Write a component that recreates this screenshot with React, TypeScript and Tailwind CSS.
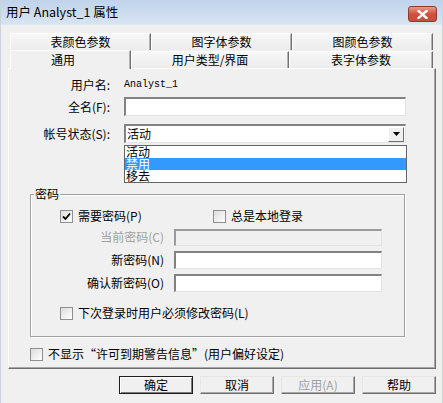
import React from "react";

const sunken =
  "bg-white border-t-2 border-l-2 border-r border-b border-t-[#828282] border-l-[#828282] border-r-[#e3e3e3] border-b-[#e3e3e3]";

function CheckBox({ checked = false }: { checked?: boolean }) {
  return (
    <span className="flex items-center justify-center w-[13px] h-[13px] shrink-0 border border-[#8f8f8f] bg-gradient-to-br from-[#dcdcdc] to-white">
      {checked && (
        <svg width="9" height="9" viewBox="0 0 9 9">
          <path d="M1 4.5 L3.5 7 L8 1.5" fill="none" stroke="#000" strokeWidth="1.8" />
        </svg>
      )}
    </span>
  );
}

function Check({ checked, label, className = "" }: { checked?: boolean; label: string; className?: string }) {
  return (
    <div className={"flex items-center gap-[5px] h-[14px] " + className}>
      <CheckBox checked={checked} />
      <span className="text-[12px] leading-[14px]">{label}</span>
    </div>
  );
}

function Tab({ label, w, selected = false }: { label: string; w: string; selected?: boolean }) {
  return (
    <div
      className={
        w +
        " flex items-center justify-center text-[12px] leading-[14px] border-t border-l border-t-white border-l-white border-r border-r-[#6f6f6f] shadow-[inset_-1px_0_0_#b4b4b4] " +
        (selected
          ? "h-[19px] -mb-px z-10 bg-[#f0f0f0] justify-start pl-[40px] self-start"
          : "h-[17px] bg-gradient-to-b from-[#f7f7f7] to-[#ececec] self-end")
      }
    >
      {label}
    </div>
  );
}

function Btn({ label, def = false, disabled = false }: { label: string; def?: boolean; disabled?: boolean }) {
  return (
    <button
      className={
        "w-[74px] h-[18px] flex items-center justify-center text-[12px] leading-[14px] bg-[#f0f0f0] " +
        (def
          ? "border border-[#1e1e1e] shadow-[inset_1px_1px_0_#fff,inset_-1px_-1px_0_#7a7a7a]"
          : "border border-t-[#e6e6e6] border-l-[#e6e6e6] border-r-[#6f6f6f] border-b-[#6f6f6f] shadow-[inset_-1px_-1px_0_#a8a8a8]") +
        (disabled ? " text-[#a0a0a0]" : " text-black")
      }
    >
      {label}
    </button>
  );
}

export default function App() {
  return (
    <div className="w-[443px] h-[403px] bg-[#f0f0f0] flex flex-col overflow-hidden text-black font-['Noto_Sans_CJK_SC',sans-serif] border-l border-r border-[#c9d3de]">
      {/* 标题栏 */}
      <div className="h-[25px] shrink-0 flex items-center justify-between pl-[5px] pr-[5px] bg-gradient-to-b from-[#c0d3ea] to-[#d7e4f2] border-b border-[#dfe7f1]">
        <span className="text-[12.5px] leading-[16px]">用户 Analyst_1 属性</span>
        <div className="mt-[4px] w-[29px] h-[16px] rounded-[3px] border border-[#8a3a30] bg-gradient-to-b from-[#e79a8a] via-[#cf4f3c] to-[#c8503d] flex items-center justify-center">
          <svg width="11" height="9" viewBox="0 0 11 9">
            <path d="M1.5 1 L9.5 8 M9.5 1 L1.5 8" stroke="#fff" strokeWidth="2.4" strokeLinecap="square" />
          </svg>
        </div>
      </div>

      {/* 选项卡 */}
      <div className="mt-[8px] ml-[9px] flex flex-col">
        <div className="flex w-[423px]">
          <Tab label="表颜色参数" w="w-[141px]" />
          <Tab label="图字体参数" w="w-[141px]" />
          <Tab label="图颜色参数" w="w-[141px]" />
        </div>
        <div className="flex w-[423px] h-[18px]">
          <Tab label="通用" w="w-[121px]" selected />
          <Tab label="用户类型/界面" w="w-[158px]" />
          <Tab label="表字体参数" w="w-[144px]" />
        </div>
      </div>

      {/* 面板 */}
      <div className="ml-[7px] w-[428px] h-[301px] shrink-0 border border-t-white border-l-white border-r-[#6f6f6f] border-b-[#6f6f6f] shadow-[inset_-1px_-1px_0_#a8a8a8] flex flex-col">
        <div className="pt-[9px] flex flex-col">
          <div className="flex items-center h-[14px]">
            <span className="w-[101px] text-right text-[12px] leading-[14px]">用户名:</span>
            <span className="ml-[14px] font-['Liberation_Mono',monospace] text-[10px] leading-[14px]">Analyst_1</span>
          </div>
          <div className="flex items-center mt-[5px] h-[19px]">
            <span className="w-[101px] text-right text-[12px] leading-[14px]">全名(F):</span>
            <div className={"ml-[14px] w-[282px] h-[19px] " + sunken} />
          </div>
          <div className="flex items-center mt-[8px] h-[19px]">
            <span className="w-[101px] text-right text-[12px] leading-[14px]">帐号状态(S):</span>
            <div className="relative ml-[14px]">
              <div className={"w-[282px] h-[19px] flex items-center justify-between pr-[1px] " + sunken}>
                <span className="pl-[1px] text-[12px] leading-[14px]">活动</span>
                <span className="w-[16px] h-[15px] flex items-center justify-center bg-[#f0f0f0] border border-t-white border-l-white border-r-[#6f6f6f] border-b-[#6f6f6f]">
                  <svg width="7" height="4" viewBox="0 0 7 4">
                    <path d="M0 0 H7 L3.5 4 Z" fill="#000" />
                  </svg>
                </span>
              </div>
              {/* 下拉列表 */}
              <div className="absolute left-0 top-[21px] w-[283px] bg-white border border-[#646464] flex flex-col z-20">
                <div className="h-[12px] pl-[1px] text-[12px] leading-[12px]">活动</div>
                <div className="h-[12px] pl-[1px] text-[12px] leading-[12px] bg-[#3399ff] text-white">禁用</div>
                <div className="h-[12px] pl-[1px] text-[12px] leading-[12px]">移去</div>
              </div>
            </div>
          </div>
        </div>

        {/* 密码 */}
        <fieldset className="mt-[44px] ml-[21px] w-[375px] h-[150px] border border-[#a0a0a0] shadow-[inset_1px_1px_0_#fff,1px_1px_0_#fff] flex flex-col">
          <legend className="ml-[3px] px-[1px] text-[12px] leading-[14px]">密码</legend>
          <div className="flex mt-[8px] ml-[29px]">
            <Check checked label="需要密码(P)" className="w-[153px]" />
            <Check label="总是本地登录" />
          </div>
          <div className="flex flex-col gap-[5px] mt-[5px]">
            <div className="flex items-center h-[18px]">
              <span className="w-[133px] text-right text-[12px] leading-[14px] text-[#a0a0a0]">当前密码(C)</span>
              <div className="ml-[10px] w-[208px] h-[17px] bg-[#f0f0f0] border-t-2 border-l-2 border-r border-b border-t-[#9a9a9a] border-l-[#9a9a9a] border-r-[#e3e3e3] border-b-[#e3e3e3]" />
            </div>
            <div className="flex items-center h-[18px]">
              <span className="w-[133px] text-right text-[12px] leading-[14px]">新密码(N)</span>
              <div className={"ml-[10px] w-[208px] h-[18px] " + sunken} />
            </div>
            <div className="flex items-center h-[18px]">
              <span className="w-[133px] text-right text-[12px] leading-[14px]">确认新密码(O)</span>
              <div className={"ml-[10px] w-[208px] h-[18px] " + sunken} />
            </div>
          </div>
          <Check label="下次登录时用户必须修改密码(L)" className="mt-[14px] ml-[29px]" />
        </fieldset>

        <Check label="不显示“许可到期警告信息”(用户偏好设定)" className="mt-[10px] ml-[21px]" />
      </div>

      {/* 按钮 */}
      <div className="mt-[7px] flex justify-end gap-[7px] pr-[6px]">
        <Btn label="确定" def />
        <Btn label="取消" />
        <Btn label="应用(A)" disabled />
        <Btn label="帮助" />
      </div>
    </div>
  );
}
